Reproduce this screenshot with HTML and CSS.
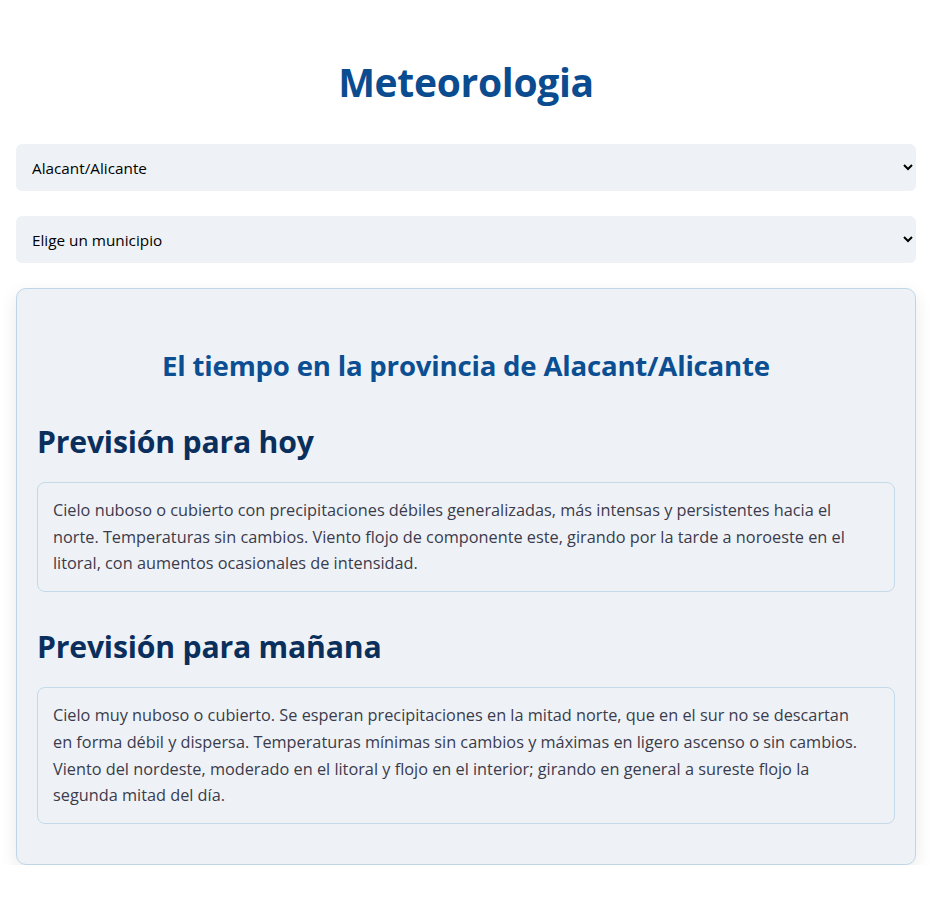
FILE: index.html
```html
<!DOCTYPE html>
<html lang="es">
<head>
<meta charset="utf-8">
<title>Meteorologia</title>
<link rel="stylesheet" href="styles.css">
</head>
<body>
<main class="page">
  <h1 class="title">Meteorologia</h1>
  <select class="field">
    <option>Alacant/Alicante</option>
  </select>
  <select class="field">
    <option>Elige un municipio</option>
  </select>
  <section class="card">
    <h2 class="card-title">El tiempo en la provincia de Alacant/Alicante</h2>
    <h3 class="section-title">Previsión para hoy</h3>
    <div class="forecast">
      <p>Cielo nuboso o cubierto con precipitaciones débiles generalizadas, más intensas y persistentes hacia el<br>norte. Temperaturas sin cambios. Viento flojo de componente este, girando por la tarde a noroeste en el<br>litoral, con aumentos ocasionales de intensidad.</p>
    </div>
    <h3 class="section-title">Previsión para mañana</h3>
    <div class="forecast">
      <p>Cielo muy nuboso o cubierto. Se esperan precipitaciones en la mitad norte, que en el sur no se descartan<br>en forma débil y dispersa. Temperaturas mínimas sin cambios y máximas en ligero ascenso o sin cambios.<br>Viento del nordeste, moderado en el litoral y flojo en el interior; girando en general a sureste flojo la<br>segunda mitad del día.</p>
    </div>
  </section>
</main>
</body>
</html>
```

FILE: styles.css
```css
* { box-sizing: border-box; }

html, body {
  margin: 0;
  padding: 0;
  background: #ffffff;
}

body {
  font-family: "Open Sans", "Noto Sans", sans-serif;
  color: #3b3b4b;
}

.page {
  padding: 58px 17px 0 16px;
  display: flex;
  flex-direction: column;
}

.title {
  margin: 0 0 38px;
  text-align: center;
  font-size: 39px;
  line-height: 48px;
  font-weight: 700;
  color: #0a4c8f;
  letter-spacing: -0.3px;
}

.field {
  display: block;
  width: 100%;
  height: 47px;
  margin: 0 0 25px;
  padding: 0 14px 0 12px;
  border: none;
  border-radius: 6px;
  background-color: #eef2f6;
  color: #000;
  font-family: "Open Sans", "Noto Sans", sans-serif;
  font-size: 15.3px;
}

.card {
  background: #eef2f6;
  border: 1px solid #bfd6e7;
  border-radius: 10px;
  box-shadow: 0 6px 18px rgba(0, 0, 0, 0.09);
  padding: 59px 20px 40px;
}

.card-title {
  margin: 0 0 41px;
  text-align: center;
  font-size: 27.6px;
  line-height: 34px;
  font-weight: 700;
  color: #0b4f92;
  letter-spacing: -0.2px;
}

.section-title {
  margin: 0 0 21px;
  font-size: 30.2px;
  line-height: 38px;
  font-weight: 700;
  color: #0b2f5d;
  letter-spacing: -0.2px;
}

.forecast + .section-title {
  margin-top: 36px;
}

.forecast {
  background: #eef2f7;
  border: 1px solid #c5d9e8;
  border-radius: 8px;
  padding: 14px 15px;
}

.forecast p {
  margin: 0;
  font-size: 16.3px;
  line-height: 26.7px;
  color: #3b3b4b;
}
```
